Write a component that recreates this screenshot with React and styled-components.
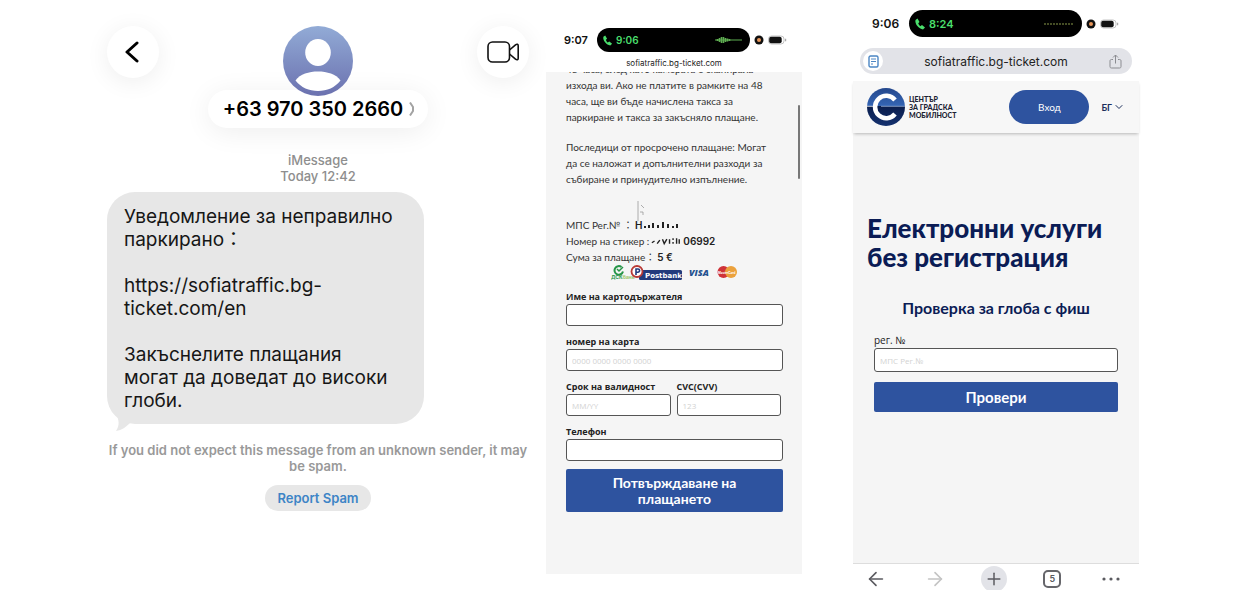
import React from 'react'
import styled, { createGlobalStyle } from 'styled-components'
import { ArrowLeft, ArrowRight, ChevronDown, Plus } from 'lucide-react'

const GlobalStyle = createGlobalStyle`
  * {
    box-sizing: border-box;
  }
  body {
    margin: 0;
    background: #fff;
    font-family: Inter, "Noto Sans CJK JP", sans-serif;
    color: #111;
  }
  h1, h2, p {
    margin: 0;
  }
  button, input {
    font-family: inherit;
  }
`

const SITE_FONT = 'Lato, "Noto Sans CJK JP", sans-serif'
const LABEL_FONT = '"Open Sans", "Noto Sans CJK JP", sans-serif'

function PhoneIcon({ size }) {
  return (
    <svg width={size} height={size} viewBox="0 0 24 24" fill="#4ade6c" aria-hidden="true">
      <path d="M7 1 3 4c-2 8 7 18 15 19l4-4-6-5-3.500 2.500c-2-1.500-3.500-4-4-6L11 8z" />
    </svg>
  )
}

function Battery() {
  return (
    <svg width="19" height="10" viewBox="0 0 19 10" aria-hidden="true">
      <rect x="0.500" y="1" width="15.500" height="8" rx="3" fill="#fff" stroke="#c4c4c4" />
      <rect x="1.200" y="1.800" width="12.500" height="6.400" rx="2" fill="#111" />
      <path d="M17.600 3.800v2.400" stroke="#aaa" strokeWidth="1.200" />
    </svg>
  )
}

function RecordingDot() {
  return (
    <svg width="10" height="10" viewBox="0 0 10 10" aria-hidden="true">
      <circle cx="5" cy="5" r="4.500" fill="#111" />
      <circle cx="5" cy="5" r="2" fill="#e8965a" />
    </svg>
  )
}

function Avatar() {
  return (
    <svg width="70" height="70" viewBox="0 0 70 70" aria-hidden="true">
      <defs>
        <linearGradient id="avatar" x1="0" y1="0" x2="0" y2="1">
          <stop offset="0" stopColor="#92abd6" />
          <stop offset="1" stopColor="#6b71af" />
        </linearGradient>
      </defs>
      <circle cx="35" cy="35" r="35" fill="url(#avatar)" />
      <ellipse cx="35" cy="26.500" rx="12.800" ry="13.500" fill="#fff" />
      <path d="M12.500 54.500C17 48 26 45.500 35 45.500s18 2.500 22.500 9C52 61.500 44 65 35 65s-17-3.500-22.500-10.500z" fill="#fff" />
    </svg>
  )
}

function VideoIcon() {
  return (
    <svg width="32" height="22" viewBox="0 0 32 22" fill="none" stroke="#111" strokeWidth="1.600" strokeLinejoin="round" aria-hidden="true">
      <rect x="1" y="1" width="21.500" height="20" rx="4.500" />
      <path d="M22.500 9l6-5.200c1.500-1.100 2.700-.7 2.700 1v12.400c0 1.700-1.200 2.100-2.700 1l-6-5.200" />
    </svg>
  )
}

function CenterLogo() {
  return (
    <svg width="38" height="38" viewBox="0 0 38 38" aria-hidden="true">
      <defs>
        <linearGradient id="logo" x1="0" y1="0" x2="0" y2="1">
          <stop offset="0" stopColor="#24478c" />
          <stop offset="0.480" stopColor="#3566b5" />
          <stop offset="0.480" stopColor="#0b1e4d" />
          <stop offset="1" stopColor="#14316f" />
        </linearGradient>
      </defs>
      <circle cx="19" cy="19" r="19" fill="url(#logo)" />
      <path d="M28 12A11.200 11.200 0 1 0 28 26" fill="none" stroke="#fff" strokeWidth="4.500" />
      <path d="M0 18.300h10" stroke="#fff" strokeWidth="0.800" />
      <path d="M14 18.300h24" stroke="#9db5dc" strokeWidth="0.800" />
    </svg>
  )
}

function PaymentLogos() {
  return (
    <svg width="128" height="18" viewBox="0 0 128 18" role="img" aria-label="Postbank, VISA, MasterCard">
      <path d="M10.500 2A4.300 4.300 0 1 0 12 6.500" fill="none" stroke="#269447" strokeWidth="2" />
      <path d="M6 4l2 2 4-4" fill="none" stroke="#269447" strokeWidth="1.500" />
      <text x="0" y="14" fontSize="5" fontWeight="700" fontFamily="Inter" fill="#269447">ДСК<tspan fill="#9cc46a">банк</tspan></text>
      <rect x="28" y="5" width="43" height="10" rx="1.500" fill="#233b7c" />
      <circle cx="26" cy="6.500" r="5.500" fill="#fff" stroke="#b83a35" strokeWidth="1.800" />
      <path d="M25 10V4h2a1.500 1.500 0 0 1 0 3.200h-2" fill="none" stroke="#233b7c" strokeWidth="1.600" />
      <text x="34" y="13" fontSize="7" fontWeight="700" fontFamily="DejaVu Sans" fill="#fff">Postbank</text>
      <text x="78" y="11" fontSize="9" fontWeight="800" fontStyle="italic" fontFamily="Open Sans" fill="#24518f">VISA</text>
      <circle cx="112.500" cy="7" r="6" fill="#cf3339" />
      <circle cx="120" cy="7" r="6" fill="#eba13c" />
      <text x="107" y="8.500" fontSize="3" fontWeight="700" fontFamily="Inter" fill="#fff">MasterCard</text>
    </svg>
  )
}

const Page = styled.main`
  display: flex;
  align-items: flex-start;
  padding: 0 111px 0 100px;
  overflow: hidden;
`

/* ---------- messages ---------- */

const Messages = styled.section`
  flex: 436 1 0;
  min-width: 0;
  display: flex;
  flex-direction: column;
  align-items: center;
`
const MessagesHeader = styled.header`
  width: 100%;
  display: flex;
  justify-content: space-between;
  align-items: flex-start;
  padding: 26px 7px 0;
`
const RoundButton = styled.button`
  width: 52px;
  height: 52px;
  display: flex;
  align-items: center;
  justify-content: center;
  padding: 0;
  border: 0;
  border-radius: 50%;
  background: #fff;
  color: #000;
  box-shadow: 0 4px 24px rgba(0, 0, 0, 0.07);
`
const Contact = styled.div`
  display: flex;
  flex-direction: column;
  align-items: center;
  svg {
    position: relative;
    z-index: 1;
  }
`
const ContactName = styled.button`
  height: 38px;
  display: flex;
  align-items: center;
  gap: 6px;
  margin-top: -6px;
  padding: 0 13px 0 15px;
  border: 0;
  border-radius: 19px;
  background: #fff;
  box-shadow: 0 4px 28px rgba(0, 0, 0, 0.07);
  font-size: 20px;
  font-weight: 600;
  white-space: nowrap;
  color: #000;
`
const Stamp = styled.p`
  margin-top: 24px;
  font-size: 13px;
  line-height: 16px;
  font-weight: 500;
  text-align: center;
  color: #8e8e8e;
`
const Bubble = styled.div`
  position: relative;
  align-self: flex-start;
  width: 317px;
  margin: 8px 0 0 7px;
  padding: 13px 16px 12px 17px;
  border-radius: 28px;
  background: #e7e7e7;
  font-size: 19px;
  line-height: 23px;
  white-space: pre-line;
  color: #161616;
  svg {
    position: absolute;
    left: 6px;
    bottom: -8px;
  }
`
const SpamNote = styled.p`
  margin-top: 18px;
  padding: 0 8px;
  font-size: 13px;
  line-height: 16px;
  font-weight: 600;
  text-align: center;
  color: #999;
`
const ReportButton = styled.button`
  height: 26px;
  margin-top: 11px;
  padding: 0 12px;
  border: 0;
  border-radius: 13px;
  background: #e7e7e7;
  font-size: 13px;
  font-weight: 600;
  color: #3d84c6;
`

/* ---------- shared phone parts ---------- */

const Phone = styled.section`
  flex: ${props => props.$grow} 1 0;
  min-width: 0;
  margin-left: ${props => props.$gap};
`
const StatusBar = styled.div`
  display: flex;
  align-items: center;
  gap: 4px;
  padding: ${props => props.$pad};
  font-size: ${props => (props.$large ? '12px' : '11px')};
  font-weight: 600;
  svg {
    flex: none;
  }
`
const Time = styled.span`
  width: ${props => (props.$large ? '33px' : '29px')};
`
const Island = styled.div`
  flex: 1;
  height: ${props => (props.$large ? '27px' : '24px')};
  display: flex;
  align-items: center;
  gap: 3px;
  padding: 0 8px 0 5px;
  border-radius: 14px;
  background: #000;
  color: #4ade6c;
  font-size: ${props => (props.$large ? '11px' : '10px')};
  svg:last-child {
    margin-left: auto;
  }
`
const Site = styled.div`
  background: #f5f5f5;
  font-family: ${SITE_FONT};
`
const Field = styled.label`
  flex: 1;
  min-width: 0;
  display: block;
  font-family: ${LABEL_FONT};
  font-size: ${props => (props.$large ? '10px' : '9px')};
  line-height: 15px;
  font-weight: ${props => (props.$large ? 500 : 700)};
  color: #222;
`
const TextInput = styled.input`
  display: block;
  width: 100%;
  height: ${props => (props.$large ? '24px' : '22px')};
  padding: 0 5px;
  border: 1px solid #555;
  border-radius: 3px;
  background: #fff;
  font-size: 8px;
  outline: 0;
  &::placeholder {
    color: #d2d2d2;
    opacity: 1;
  }
`
const SubmitButton = styled.button`
  display: block;
  width: 100%;
  height: ${props => (props.$large ? '30px' : '43px')};
  margin-top: ${props => (props.$large ? '10px' : '0')};
  padding: 0 32px;
  border: 0;
  border-radius: 2px;
  background: #2e539f;
  color: #fff;
  font-size: ${props => (props.$large ? '15px' : '14px')};
  line-height: 16px;
  font-weight: 700;
`

/* ---------- payment page ---------- */

const PlainUrl = styled.p`
  height: 20px;
  font-size: 8px;
  line-height: 22px;
  text-align: center;
  color: #222;
`
const PaymentSite = styled(Site)`
  position: relative;
  height: 502px;
  overflow: hidden;
  padding: 0 19px 0 20px;
  font-size: 10px;
  line-height: 16px;
  color: #333;
`
const Scrollbar = styled.div`
  position: absolute;
  top: 33px;
  right: 2px;
  width: 2px;
  height: 74px;
  border-radius: 1px;
  background: #777;
`
const Notice = styled.div`
  display: flex;
  flex-direction: column;
  gap: 14px;
  margin-top: -11px;
  white-space: pre;
`
const Details = styled.div`
  margin-top: 30px;
`
const DetailRow = styled.p`
  display: flex;
  align-items: center;
  gap: 2px;
  height: 16px;
  white-space: nowrap;
  svg {
    overflow: visible;
  }
  strong {
    font-family: Inter, sans-serif;
    font-weight: 600;
    color: #222;
  }
`
const Logos = styled.div`
  display: flex;
  justify-content: center;
  height: 24px;
`
const Form = styled.form`
  display: flex;
  flex-direction: column;
  gap: 8px;
`
const FieldPair = styled.div`
  display: flex;
  gap: 6px;
  padding-right: 2px;
`

/* ---------- service page ---------- */

const AddressBar = styled.div`
  display: flex;
  align-items: center;
  justify-content: space-between;
  height: 26px;
  margin: 11px 7px 7px;
  padding: 0 10px 0 3px;
  border-radius: 13px;
  background: #e2e3e8;
  font-size: 12px;
  color: #222;
`
const ReaderBadge = styled.span`
  width: 20px;
  height: 20px;
  display: flex;
  align-items: center;
  justify-content: center;
  border-radius: 50%;
  background: #fff;
`
const SiteHeader = styled.header`
  display: flex;
  align-items: center;
  height: 52px;
  padding: 0 14px;
  background: #f7f7f7;
  box-shadow: 0 2px 3px -1px rgba(0, 0, 0, 0.25);
`
const LogoText = styled.span`
  margin-left: 4px;
  font-size: 7px;
  line-height: 8px;
  font-weight: 900;
  white-space: pre;
  color: #1b2233;
`
const LoginButton = styled.button`
  width: 80px;
  height: 34px;
  margin-left: auto;
  border: 0;
  border-radius: 17px;
  background: #2e539f;
  color: #fff;
  font-size: 10px;
`
const Language = styled.button`
  display: flex;
  align-items: center;
  gap: 1px;
  margin-left: 12px;
  padding: 0;
  border: 0;
  background: none;
  font-size: 9px;
  font-weight: 700;
  color: #1c2f5c;
`
const Services = styled.div`
  height: 430px;
  padding: 81px 21px 0;
  color: #0b1c55;
`
const Title = styled.h1`
  margin: 0 -7px;
  font-size: 26px;
  line-height: 29px;
  font-weight: 900;
  white-space: nowrap;
`
const Subtitle = styled.h2`
  margin: 26px 0 15px;
  font-size: 16px;
  line-height: 20px;
  font-weight: 700;
  text-align: center;
  white-space: nowrap;
`
const Toolbar = styled.nav`
  display: flex;
  align-items: center;
  justify-content: space-between;
  height: 30px;
  padding: 0 15px 0 10px;
  border-top: 1px solid #ddd;
`
const ToolButton = styled.button`
  width: 26px;
  height: 26px;
  display: flex;
  align-items: center;
  justify-content: center;
  padding: 0;
  border: 0;
  border-radius: 50%;
  background: ${props => (props.$filled ? '#e2e3e8' : 'none')};
  color: ${props => (props.$faded ? '#c4c4c4' : '#5b5b60')};
`
const TabCount = styled.span`
  width: 18px;
  height: 18px;
  border: 2px solid #66666b;
  border-radius: 5px;
  font-size: 9px;
  line-height: 14px;
  font-weight: 600;
`

function MessagesPanel() {
  return (
    <Messages>
      <MessagesHeader>
        <RoundButton aria-label="Back">
          <svg width="16" height="22" viewBox="0 0 16 22" fill="none" stroke="#000" strokeWidth="3" strokeLinecap="round" strokeLinejoin="round" aria-hidden="true">
            <path d="M12 2 2 11l10 9" />
          </svg>
        </RoundButton>
        <Contact>
          <Avatar />
          <ContactName>
            +63 970 350 2660
            <svg width="6" height="14" viewBox="0 0 6 14" fill="none" stroke="#a3a3a3" strokeWidth="2" aria-hidden="true">
              <path d="M1 0.500 4 5v4L1 13.500" />
            </svg>
          </ContactName>
        </Contact>
        <RoundButton aria-label="Video call">
          <VideoIcon />
        </RoundButton>
      </MessagesHeader>
      <Stamp>
        iMessage
        <br />
        Today 12:42
      </Stamp>
      <Bubble lang="bg">
        {'Уведомление за неправилно\nпаркирано：\n\nhttps://sofiatraffic.bg-\nticket.com/en\n\nЗакъснелите плащания\nмогат да доведат до високи\nглоби.'}
        <svg width="20" height="18" viewBox="0 0 20 18" aria-hidden="true">
          <path d="M3 0c3 6 4 11 0 17 6-1 10-4 14-8z" fill="#e7e7e7" />
        </svg>
      </Bubble>
      <SpamNote>If you did not expect this message from an unknown sender, it may be spam.</SpamNote>
      <ReportButton>Report Spam</ReportButton>
    </Messages>
  )
}

function PaymentPhone() {
  return (
    <Phone $grow={256} $gap="10px">
      <StatusBar $pad="28px 15px 0 18px">
        <Time>9:07</Time>
        <Island>
          <PhoneIcon size={11} />
          9:06
          <svg width="27" height="8" viewBox="0 0 27 8" stroke="#5fae52" aria-hidden="true">
            <path d="M0 4h27" />
            <path d="M2.500 3v2M4.500 2v4M6.500 1v6M8.500 1v6M10.500 2v4M12.500 2.500v3M14.500 3v2" strokeWidth="1.600" />
          </svg>
        </Island>
        <RecordingDot />
        <Battery />
      </StatusBar>
      <PlainUrl>sofiatraffic.bg-ticket.com</PlainUrl>
      <PaymentSite lang="bg">
        <Scrollbar />
        <Notice>
          <p>{'48 часа, след като камерата е сканирала\nизхода ви. Ако не платите в рамките на 48\nчаса, ще ви бъде начислена такса за\nпаркиране и такса за закъсняло плащане.'}</p>
          <p>{'Последици от просрочено плащане: Могат\nда се наложат и допълнителни разходи за\nсъбиране и принудително изпълнение.'}</p>
        </Notice>
        <Details>
          <DetailRow>
            МПС Рег.№ ： <strong>Н</strong>
            <svg width="40" height="8" viewBox="0 0 40 8" stroke="#222" aria-hidden="true">
              <path d="M1 5v2M5 4v3M9 2v5M14 4v3M19 1v6M24 3v4M29 5v2M33 3v4" strokeWidth="2" />
              <path d="M-6-20V0M-3-16l3 3M-4-9h3v3" fill="none" stroke="#999" strokeWidth="0.800" />
            </svg>
          </DetailRow>
          <DetailRow>
            Номер на стикер :
            <svg width="30" height="8" viewBox="0 0 34 8" stroke="#222" aria-hidden="true">
              <path d="M1 6l3-2M7 7l3-4M13 2l2 5 3-5M21 2v5M25 1v2M25 5v2M29 1v6M32 2v5" fill="none" strokeWidth="1.600" />
            </svg>
            <strong>06992</strong>
          </DetailRow>
          <DetailRow>
            Сума за плащане： <strong>5 €</strong>
          </DetailRow>
        </Details>
        <Logos>
          <PaymentLogos />
        </Logos>
        <Form onSubmit={e => e.preventDefault()}>
          <Field>
            Име на картодържателя
            <TextInput type="text" autoComplete="off" />
          </Field>
          <Field>
            номер на карта
            <TextInput type="text" autoComplete="off" placeholder="0000 0000 0000 0000" />
          </Field>
          <FieldPair>
            <Field>
              Срок на валидност
              <TextInput type="text" autoComplete="off" placeholder="MM/YY" />
            </Field>
            <Field>
              CVC(CVV)
              <TextInput type="text" autoComplete="off" placeholder="123" />
            </Field>
          </FieldPair>
          <Field>
            Телефон
            <TextInput type="text" autoComplete="off" />
          </Field>
          <SubmitButton type="button">Потвърждаване на плащането</SubmitButton>
        </Form>
      </PaymentSite>
    </Phone>
  )
}

function ServicesPhone() {
  return (
    <Phone $grow={286} $gap="51px">
      <StatusBar $large $pad="10px 20px 0 19px">
        <Time $large>9:06</Time>
        <Island $large>
          <PhoneIcon size={12} />
          8:24
          <svg width="30" height="2" viewBox="0 0 30 2" stroke="#8a9a4a" aria-hidden="true">
            <path d="M0 1h30" strokeDasharray="2 1" />
          </svg>
        </Island>
        <RecordingDot />
        <Battery />
      </StatusBar>
      <AddressBar>
        <ReaderBadge>
          <svg width="11" height="13" viewBox="0 0 11 13" fill="none" stroke="#4c86c4" aria-hidden="true">
            <rect x="1" y="1" width="9" height="11" rx="1.500" strokeWidth="1.400" />
            <path d="M3 4h5M3 6.500h5M3 9h2" />
          </svg>
        </ReaderBadge>
        sofiatraffic.bg-ticket.com
        <svg width="13" height="15" viewBox="0 0 13 15" fill="none" stroke="#8b8c91" aria-hidden="true">
          <path d="M4 5.500H2.500c-1 0-1.500.5-1.500 1.500v5.500c0 1 .5 1.500 1.500 1.500h8c1 0 1.500-.5 1.500-1.500V7c0-1-.5-1.500-1.500-1.500H9M6.500 9.500V1M4 3.500 6.500 1 9 3.500" />
        </svg>
      </AddressBar>
      <Site lang="bg">
        <SiteHeader>
          <CenterLogo />
          <LogoText>{'ЦЕНТЪР\nЗА ГРАДСКА\nМОБИЛНОСТ'}</LogoText>
          <LoginButton>Вход</LoginButton>
          <Language>
            БГ <ChevronDown size={12} />
          </Language>
        </SiteHeader>
        <Services>
          <Title>
            Електронни услуги
            <br />
            без регистрация
          </Title>
          <Subtitle>Проверка за глоба с фиш</Subtitle>
          <Field $large>
            рег. №
            <TextInput $large type="text" autoComplete="off" placeholder="МПС Рег.№" />
          </Field>
          <SubmitButton $large type="button">Провери</SubmitButton>
        </Services>
      </Site>
      <Toolbar>
        <ToolButton aria-label="Back">
          <ArrowLeft size={22} strokeWidth={1.8} />
        </ToolButton>
        <ToolButton aria-label="Forward" $faded>
          <ArrowRight size={22} strokeWidth={1.8} />
        </ToolButton>
        <ToolButton aria-label="New tab" $filled>
          <Plus size={20} strokeWidth={1.8} />
        </ToolButton>
        <ToolButton aria-label="Tabs">
          <TabCount>5</TabCount>
        </ToolButton>
        <ToolButton aria-label="More">
          <svg width="18" height="4" viewBox="0 0 18 4" fill="currentColor" aria-hidden="true">
            <circle cx="2" cy="2" r="1.600" />
            <circle cx="9" cy="2" r="1.600" />
            <circle cx="16" cy="2" r="1.600" />
          </svg>
        </ToolButton>
      </Toolbar>
    </Phone>
  )
}

export default function App() {
  return (
    <>
      <GlobalStyle />
      <Page>
        <MessagesPanel />
        <PaymentPhone />
        <ServicesPhone />
      </Page>
    </>
  )
}
